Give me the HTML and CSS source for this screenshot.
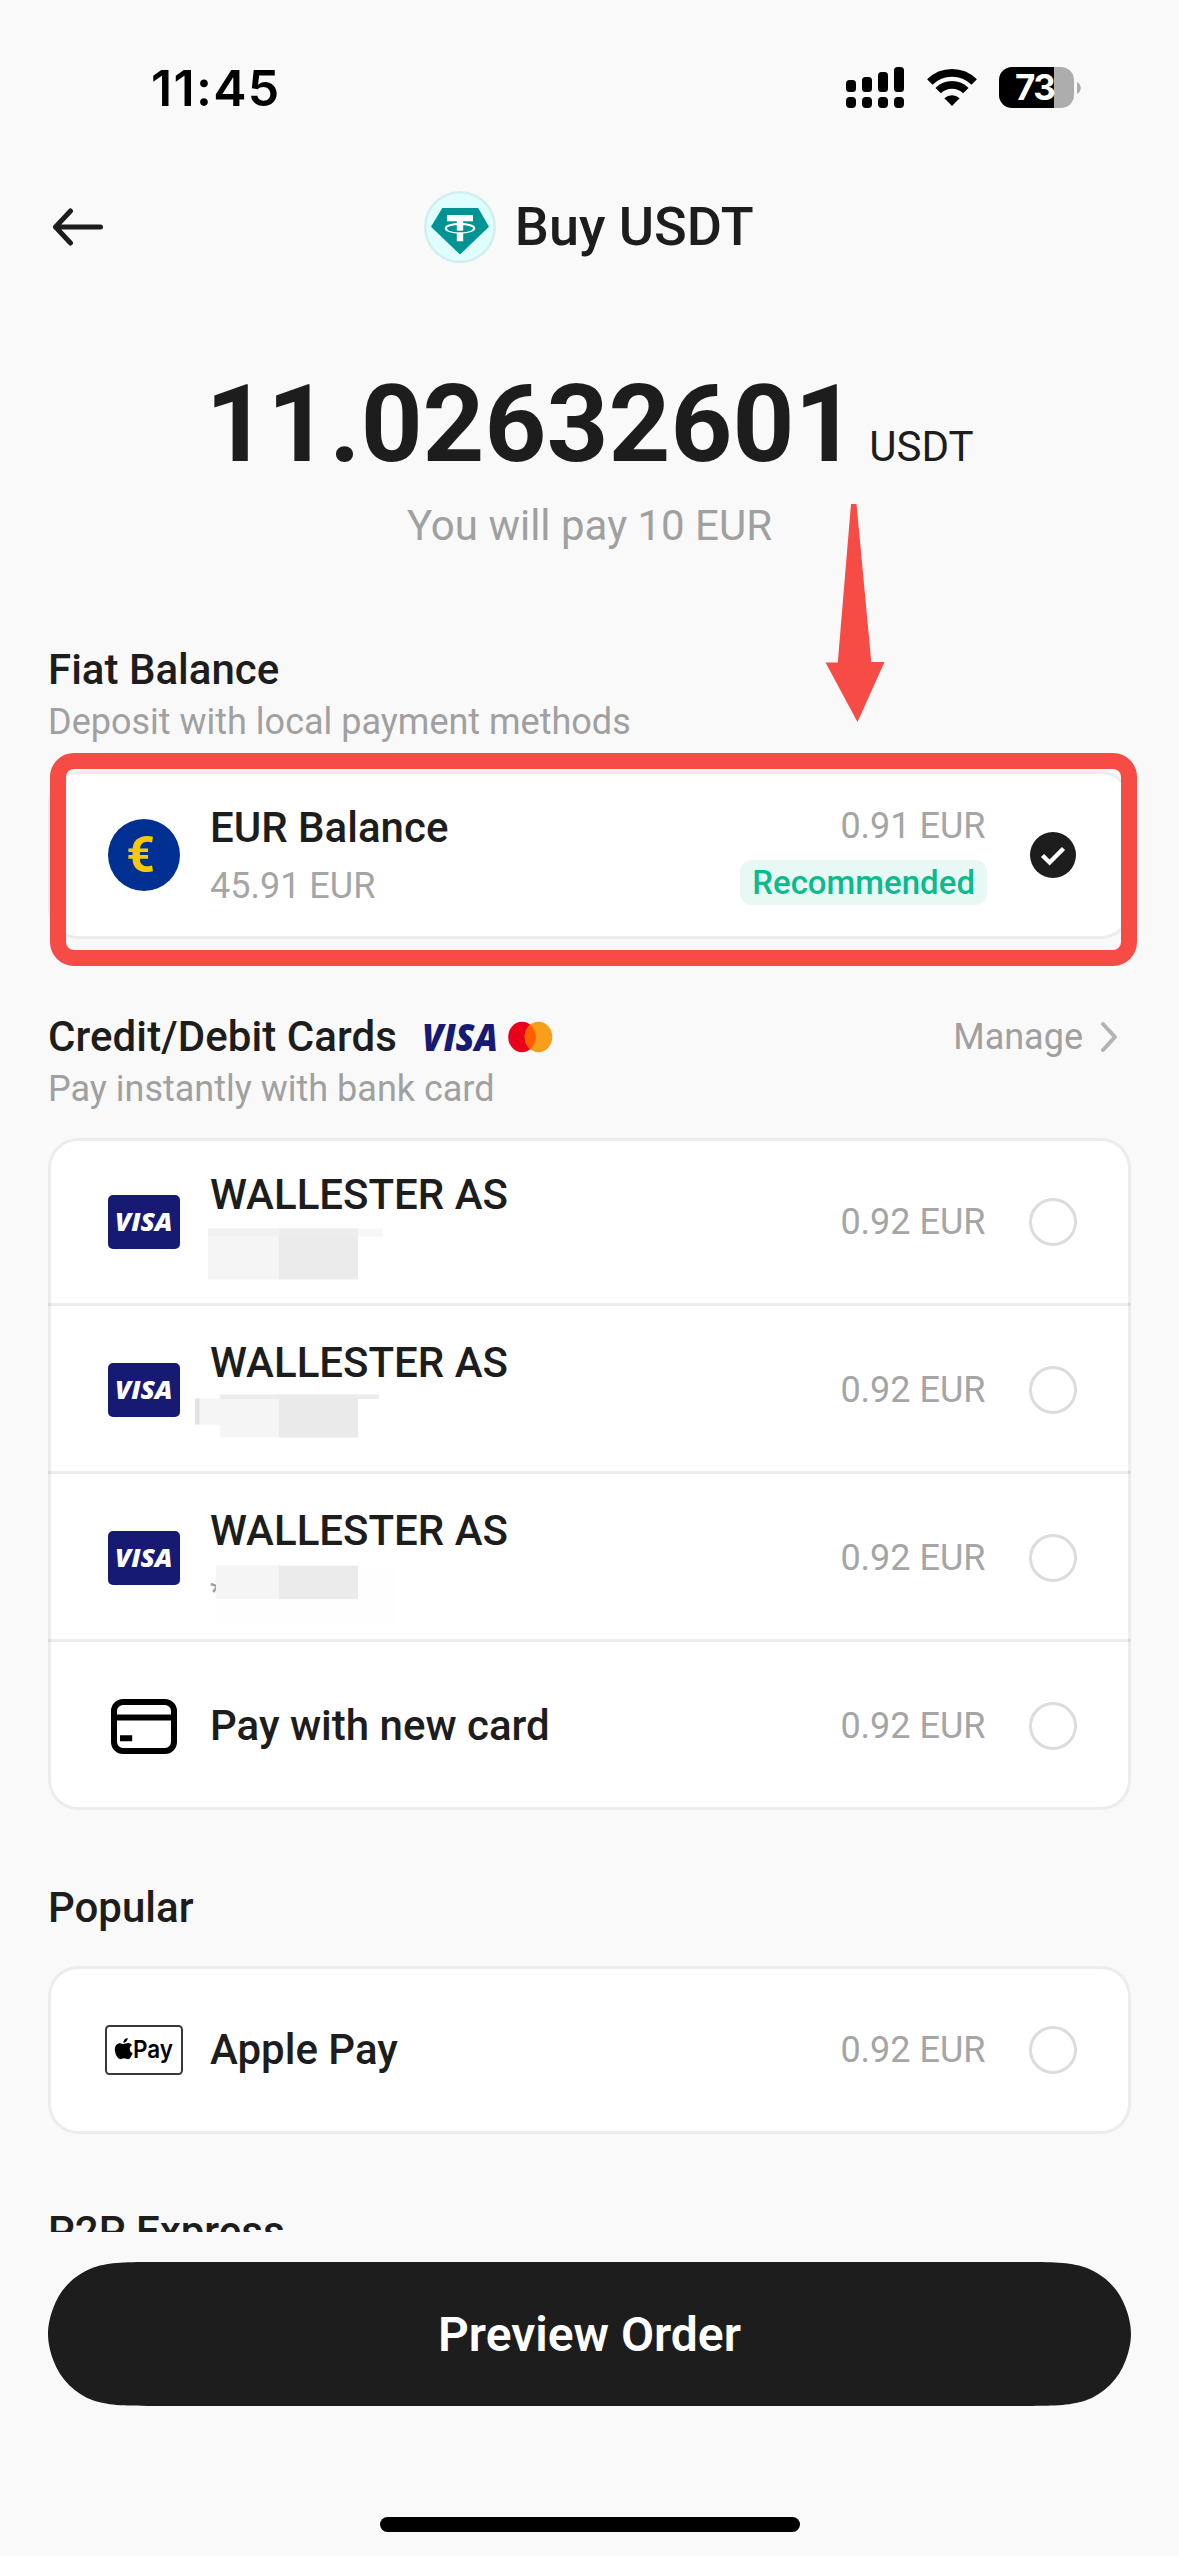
FILE: index.html
```html
<!DOCTYPE html>
<html lang="en">
<head>
<meta charset="utf-8">
<title>Buy USDT</title>
<link rel="stylesheet" href="styles.css">
</head>
<body>
<div class="screen">
  <header class="status">
    <span class="time">11:45</span>
    <div class="indicators">
      <svg width="58" height="41" viewBox="0 0 58 41">
        <rect x="0" y="13" width="10" height="12" rx="3.5"/><rect x="16" y="10" width="10" height="15" rx="3.5"/><rect x="32" y="5" width="10" height="20" rx="3.5"/><rect x="48" y="0" width="10" height="25" rx="3.5"/>
        <rect x="0" y="30" width="10" height="11" rx="4"/><rect x="16" y="30" width="10" height="11" rx="4"/><rect x="32" y="30" width="10" height="11" rx="4"/><rect x="48" y="30" width="10" height="11" rx="4"/>
      </svg>
      <svg class="wifi" width="50" height="37" viewBox="0 0 50 37">
        <path d="M2.8 13A31.5 31.5 0 0 1 47.2 13" fill="none" stroke="#000" stroke-width="7.6"/>
        <path d="M11.2 21.6A19.5 19.5 0 0 1 38.8 21.6" fill="none" stroke="#000" stroke-width="7.6"/>
        <path d="M25 37L17.4 29.2A11 11 0 0 1 32.6 29.2Z"/>
      </svg>
      <div class="battery"><span>73</span></div>
      <svg class="nub" width="4" height="12" viewBox="0 0 4 12"><path d="M0 0C5 2.5 5 9.5 0 12Z" fill="#adadad"/></svg>
    </div>
  </header>

  <nav class="nav">
    <svg class="back" width="52" height="38" viewBox="0 0 52 38"><path d="M19.5 3L4.5 19L19.5 35M4.5 19H49.5" fill="none" stroke="#1d1d1d" stroke-width="5" stroke-linecap="round" stroke-linejoin="round"/></svg>
    <svg width="72" height="72" viewBox="0 0 72 72">
      <circle cx="36" cy="36" r="34.8" fill="#dfffff" stroke="#d3eeee" stroke-width="2.4"/>
      <path d="M18.3 17H54.2L65 35.8L36 63.5L7 35.8Z" fill="#009393"/>
      <path d="M23 24H49V30.2H39.2V50.3H32.8V30.2H23Z" fill="#fff"/>
      <ellipse cx="36" cy="37.3" rx="14.3" ry="4.4" fill="none" stroke="#fff" stroke-width="2"/>
      <path d="M24 38.2C29 41.2 43 41.2 48 38.2" fill="none" stroke="#009393" stroke-width="1.6"/>
    </svg>
    <h1 class="title">Buy USDT</h1>
  </nav>

  <main class="content">
    <div class="amount"><span class="value">11.02632601</span><span class="unit">USDT</span></div>
    <p class="pay">You will pay 10 EUR</p>

    <section class="group first">
      <h2 class="heading">Fiat Balance</h2>
      <p class="sub">Deposit with local payment methods</p>
      <div class="card">
        <div class="row">
          <div class="icon"><span class="euro">€</span></div>
          <div class="info"><div class="name">EUR Balance</div><div class="detail">45.91 EUR</div></div>
          <div class="side"><div class="price">0.91 EUR</div><div class="badge">Recommended</div></div>
          <svg class="check" width="48" height="48" viewBox="0 0 48 48"><circle cx="24" cy="24" r="23" fill="#1d1d1d"/><path d="M13.5 24.5L20.6 31.5L34.5 17.5" fill="none" stroke="#fff" stroke-width="4.4"/></svg>
        </div>
      </div>
    </section>

    <section class="group">
      <div class="heading-bar">
        <h2 class="heading cards-title">Credit/Debit Cards</h2>
        <svg class="brands" width="131" height="30" viewBox="0 0 131 30">
          <text x="0" y="29" class="visa-text" font-size="37.5" textLength="76" lengthAdjust="spacingAndGlyphs" fill="#171a72">VISA</text>
          <ellipse cx="100" cy="15" rx="13.8" ry="15.2" fill="#eb001b"/>
          <ellipse cx="116.500" cy="15" rx="13.8" ry="15.2" fill="#f79e1b"/>
          <path d="M108.250 2.800A13.8 15.2 0 0 1 108.250 27.200A13.8 15.2 0 0 1 108.250 2.800Z" fill="#ff5f00"/>
        </svg>
        <span class="manage">Manage</span>
        <svg class="chevron" width="18" height="32" viewBox="0 0 18 32"><path d="M3 3L15 16L3 29" fill="none" stroke="#b3b3b3" stroke-width="4" stroke-linecap="round" stroke-linejoin="round"/></svg>
      </div>
      <p class="sub">Pay instantly with bank card</p>
      <div class="card">
        <div class="row">
          <div class="icon"><svg class="visa-card" width="72" height="54"><text x="7" y="36" class="visa-text" font-size="24.5" textLength="57.5" lengthAdjust="spacingAndGlyphs" fill="#fff">VISA</text></svg></div>
          <div class="info"><div class="name">WALLESTER AS</div>
            <svg class="mask" width="230" height="42"><rect x="-2" y="-3.5" width="71" height="51" fill="#f5f5f5"/><rect x="69" y="-3.5" width="79" height="51" fill="#ebebeb"/><rect x="148" y="-3.5" width="25" height="8" fill="#f7f7f7"/><rect x="-2" y="-3.5" width="150" height="8" fill="#eee" opacity=".6"/></svg>
          </div>
          <div class="price">0.92 EUR</div><i class="radio"></i>
        </div>
        <div class="row">
          <div class="icon"><svg class="visa-card" width="72" height="54"><text x="7" y="36" class="visa-text" font-size="24.5" textLength="57.5" lengthAdjust="spacingAndGlyphs" fill="#fff">VISA</text></svg></div>
          <div class="info"><div class="name">WALLESTER AS</div>
            <svg class="mask" width="230" height="42"><rect x="-15" y="-1.5" width="26" height="26" fill="#f5f5f5"/><rect x="-15" y="-1.5" width="4.5" height="26" fill="#e2e2e5"/><rect x="10" y="-5.5" width="59" height="43" fill="#f5f5f5"/><rect x="69" y="-5.5" width="79" height="43" fill="#eaeaea"/><rect x="10" y="-5.5" width="159" height="4.5" fill="#ececec"/></svg>
          </div>
          <div class="price">0.92 EUR</div><i class="radio"></i>
        </div>
        <div class="row">
          <div class="icon"><svg class="visa-card" width="72" height="54"><text x="7" y="36" class="visa-text" font-size="24.5" textLength="57.5" lengthAdjust="spacingAndGlyphs" fill="#fff">VISA</text></svg></div>
          <div class="info"><div class="name">WALLESTER AS</div>
            <svg class="mask" width="230" height="42"><text x="0" y="35" class="star" font-size="34" fill="#a0a0a0">*</text><rect x="6" y="-2.5" width="180" height="62" fill="#fefefe"/><rect x="6" y="-2.5" width="63" height="33.5" fill="#f5f5f5"/><rect x="69" y="-2.5" width="79" height="33.5" fill="#ebebeb"/></svg>
          </div>
          <div class="price">0.92 EUR</div><i class="radio"></i>
        </div>
        <div class="row">
          <div class="icon"><svg width="72" height="55" viewBox="0 0 72 55"><rect x="6" y="3" width="60" height="49" rx="9" fill="none" stroke="#000" stroke-width="6"/><path d="M6 18.6H66M12 39.3H24.2" stroke="#000" stroke-width="6"/></svg></div>
          <div class="info"><div class="name">Pay with new card</div></div>
          <div class="price">0.92 EUR</div><i class="radio"></i>
        </div>
      </div>
    </section>

    <section class="group">
      <h2 class="heading popular">Popular</h2>
      <div class="card">
        <div class="row">
          <div class="icon"><svg class="apple-pay" width="78" height="50" viewBox="0 0 78 50">
            <rect x="1" y="1" width="76" height="48" rx="3.5" fill="#fff" stroke="#38383a" stroke-width="2"/>
            <path transform="translate(-1.500 -1.700) scale(1.080)" d="M18.6 19.2c1.4 0 2.6-.9 4.200-.9 1.300 0 2.700.7 3.600 2-3.100 1.800-2.600 6.100.6 7.300-.7 2-2.200 5.600-4.200 5.600-1.400 0-1.900-.8-3.700-.8s-2.300.8-3.600.8c-2.300 0-5-5-5-8.900 0-3.900 2.300-5.900 4.600-5.900 1.500 0 2.600.8 3.500.8zM18.400 18.100c-.1-2.200 1.700-4.200 3.900-4.400.3 2.300-1.800 4.400-3.900 4.400z"/>
            <text x="28" y="33" class="pay-text" font-size="24.5" textLength="40" lengthAdjust="spacingAndGlyphs">Pay</text>
          </svg></div>
          <div class="info"><div class="name">Apple Pay</div></div>
          <div class="price">0.92 EUR</div><i class="radio"></i>
        </div>
      </div>
    </section>

    <section class="group"><h2 class="heading">P2P Express</h2></section>
  </main>

  <footer class="footer">
    <button class="submit">Preview Order</button>
    <div class="home"></div>
  </footer>

  <div class="callout"></div>
  <svg class="pointer" width="60" height="218" viewBox="0 0 60 218"><path d="M26 0H31.500L46.300 158H59.500L32.500 218L.5 158.600H12.800Z" fill="#f74b46"/></svg>
</div>
</body>
</html>
```
FILE: styles.css
```css
* { box-sizing: border-box; margin: 0; padding: 0; }
body { background: #f9f9f9; }
.screen {
  position: relative;
  width: 1179px;
  height: 2556px;
  display: flex;
  flex-direction: column;
  overflow: hidden;
  background: #f9f9f9;
  color: #1d1d1d;
  font-family: Roboto, sans-serif;
}

/* Status bar */
.status { display: flex; flex: none; justify-content: space-between; align-items: center; height: 175px; padding: 0 98px 0 151px; }
.time { font: 600 50px/60px Inter, sans-serif; letter-spacing: 1.3px; color: #000; }
.indicators { display: flex; align-items: center; }
.wifi { margin: 0 22.5px; }
.battery {
  width: 75px; height: 41px; border-radius: 13px; padding-left: 16px;
  background: linear-gradient(90deg, #000 55px, #adadad 55px);
  color: #fff; font: 700 35px/41px Inter, sans-serif; letter-spacing: -1.5px;
}
.nub { margin-left: 3px; }

/* Navigation */
.nav { position: relative; flex: none; display: flex; align-items: center; justify-content: center; gap: 18.5px; height: 104px; padding-right: 1px; }
.back { position: absolute; left: 51px; top: 33px; }
.title { font-size: 54px; line-height: 64px; font-weight: 500; }

/* Scrolling content */
.content { flex: none; height: 1953px; padding: 85px 48px 0; overflow: hidden; }
.amount { display: flex; justify-content: center; align-items: baseline; gap: 13px; height: 120px; }
.value { font-size: 108px; line-height: 120px; font-weight: 700; }
.unit { font-size: 42px; line-height: 50px; }
.pay { margin-top: 17px; font-size: 42px; line-height: 50px; text-align: center; color: #a0a0a0; }
.group { margin-top: 73px; }
.group.first { margin-top: 94px; }
.heading { font-size: 42px; line-height: 50px; font-weight: 500; }
.cards-title { letter-spacing: .08px; }
.popular { margin-bottom: 33px; }
.heading-bar { display: flex; align-items: center; }
.brands { margin-left: 24.5px; overflow: visible; }
.manage { margin-left: auto; font-size: 36px; line-height: 42px; color: #a0a0a0; }
.chevron { margin: 0 13px 0 17px; }
.sub { margin: 6px 0 28px; font-size: 36px; line-height: 42px; color: #a0a0a0; }

/* Payment method cards */
.card { background: #fff; border-radius: 30px; box-shadow: inset 0 0 0 3px #ececec; }
.row { display: flex; align-items: center; height: 168px; padding: 0 54px 0 60px; }
.row:not(:last-child) { box-shadow: inset 0 -3px 0 rgba(0, 0, 0, .075); }
.icon { display: flex; justify-content: center; width: 72px; margin-right: 30px; flex: none; }
.icon svg { flex: none; }
.visa-card { background: #171a72; border-radius: 5px; }
.euro {
  width: 72px; height: 72px; padding-right: 7px; border-radius: 50%; background: #003192; color: #f6c80a;
  font-size: 50px; line-height: 73px; font-weight: 700; text-align: center;
}
.info { flex: 1; }
.name { font-size: 42px; line-height: 50px; font-weight: 500; }
.detail { margin-top: 12px; font-size: 36px; line-height: 42px; color: #a5a5a5; }
.mask { display: block; margin-top: 12px; overflow: visible; }
.price { font-size: 36px; line-height: 42px; color: #a5a5a5; margin-right: 43.5px; }
.side { display: flex; flex-direction: column; align-items: flex-end; gap: 13px; margin-right: 42px; }
.side .price { margin-right: 1.5px; }
.badge { padding: 0 12px; border-radius: 12px; background: #e8f8f4; color: #0bbb8d; font-size: 33px; line-height: 45px; font-weight: 500; }
.radio { width: 48px; height: 48px; border: 3px solid #dcdcdc; border-radius: 50%; }
.visa-text { font-family: "Open Sans", sans-serif; font-weight: 800; font-style: italic; }
.pay-text { font-family: Inter, sans-serif; font-weight: 600; }
.star { font-family: Roboto, sans-serif; }

/* Bottom action */
.footer { display: flex; flex-direction: column; align-items: center; padding: 30px 48px 0; }
.submit {
  width: 1083px; height: 144px; border: 0; background: #1d1d1d; color: #fff;
  font: 600 48px/144px Roboto, sans-serif; padding-top: 1px;
  clip-path: path("M110 0H973C1004.600 0 1020.500 0 1037.500 5.400C1056.200 12.200 1070.800 26.800 1077.600 45.500C1080.500 53.300 1083 62.600 1083 72C1083 81.400 1080.500 90.700 1077.600 98.500C1070.800 117.200 1056.200 131.800 1037.500 138.600C1020.500 144 1004.600 144 973 144H110C78.400 144 62.500 144 45.500 138.600C26.800 131.800 12.200 117.200 5.400 98.500C2.500 90.700 0 81.400 0 72C0 62.600 2.500 53.300 5.400 45.500C12.200 26.800 26.800 12.200 45.500 5.400C62.500 0 78.400 0 110 0Z");
}
.home { width: 420px; height: 15px; margin-top: 111px; border-radius: 8px; background: #000; }

/* Annotations drawn over the screen */
.callout { position: absolute; left: 50px; top: 753px; width: 1087px; height: 213px; border: 16px solid #f74b46; border-radius: 24px; }
.pointer { position: absolute; left: 825px; top: 504px; }
```
